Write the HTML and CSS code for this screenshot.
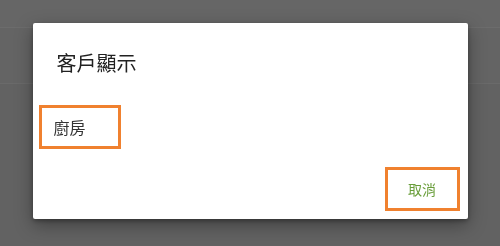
FILE: index.html
```html
<!DOCTYPE html>
<html lang="zh-Hant">
	<head>
		<meta charset="utf-8">
		<title>客戶顯示</title>
		<link rel="stylesheet" href="styles.css">
	</head>
	<body>
		<div class="app">
			<div class="topbar"></div>
			<div class="toolbar"></div>
		</div>

		<div class="overlay">
			<div class="dialog">
				<h1 class="dialog-title">客戶顯示</h1>
				<ul class="choices">
					<li class="choice">廚房</li>
				</ul>
				<div class="actions">
					<button class="btn">取消</button>
				</div>
			</div>
		</div><!-- /overlay -->
	</body>
</html>
```

FILE: styles.css
```css
*, *:after, *:before { box-sizing: border-box; }

html, body {
	margin: 0;
	height: 100%;
}

body {
	background: #626262;
	font-family: 'Noto Sans CJK TC', 'Noto Sans', sans-serif;
	overflow: hidden;
}

/*************************************
App behind the scrim
**************************************/

.topbar {
	height: 28px;
	background: #666;
	border-bottom: 1px solid #6c6c6c;
}

.toolbar {
	height: 56px;
	background: #646464;
	border-bottom: 1px solid #6a6a6a;
}

/*************************************
Dialog
**************************************/

.overlay {
	position: fixed;
	top: 0;
	left: 0;
	right: 0;
	bottom: 0;
	display: flex;
	justify-content: center;
	align-items: flex-start;
	padding-top: 23px;
}

.dialog {
	width: 435px;
	height: 196px;
	background: #fff;
	border-radius: 2px;
	box-shadow: 0 6px 18px rgba(0,0,0,0.35), 0 2px 4px rgba(0,0,0,0.3);
	display: flex;
	flex-direction: column;
}

.dialog-title {
	margin: 0;
	padding: 27px 0 0 24px;
	font-size: 20px;
	font-weight: 400;
	line-height: 26px;
	color: #212121;
}

.choices {
	list-style: none;
	margin: 0;
	padding: 29px 0 0 6px;
}

.choice {
	width: 82px;
	height: 44px;
	border: 3px solid #f0812f;
	padding: 0 0 0 12px;
	font-size: 16px;
	line-height: 38px;
	color: #333;
}

.actions {
	display: flex;
	justify-content: flex-end;
	padding: 18px 8px 0 0;
}

.btn {
	width: 75px;
	height: 44px;
	border: 3px solid #f0812f;
	background: #fff;
	padding: 0;
	font-family: inherit;
	font-size: 14px;
	color: #6a9e3b;
}
```
